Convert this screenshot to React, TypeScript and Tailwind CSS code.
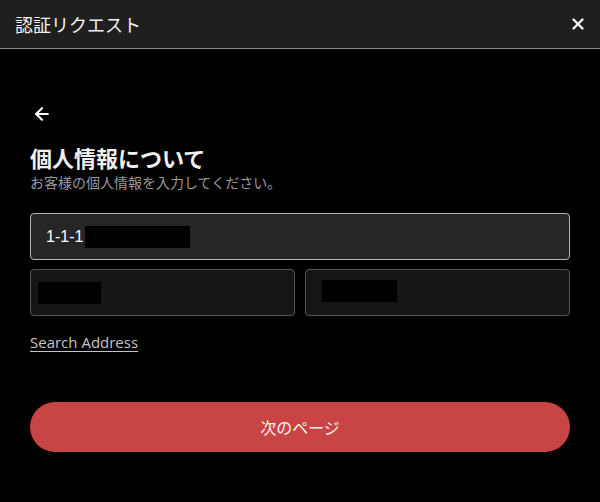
import { ArrowLeft, X } from "lucide-react";

const font = { fontFamily: '"Noto Sans CJK JP", "Noto Sans", sans-serif' };

export default function App() {
  return (
    <div className="w-[600px] h-[502px] bg-black text-white flex flex-col" style={font}>
      <header className="h-[49px] bg-[#1f1f1f] border-b border-[#8a8a8a] flex items-center justify-between pl-[15px] pr-[13px]">
        <h1 className="text-[18px] text-[#f2f2f2]">認証リクエスト</h1>
        <button className="text-white">
          <X size={18} strokeWidth={3} />
        </button>
      </header>

      <main className="flex flex-col px-[30px] pt-[55px]">
        <button className="text-white w-fit ml-[2px]">
          <ArrowLeft size={20} strokeWidth={2.5} />
        </button>
        <h2 className="mt-[18px] text-[22px] font-bold leading-[30px] text-[#f0f0f0]">個人情報について</h2>
        <p className="text-[14px] leading-[20px] text-[#9a9a9a]">お客様の個人情報を入力してください。</p>

        <div className="mt-[21px] h-[47px] rounded-[4px] border border-[#b5b5b5] bg-[#262626] flex items-center pl-[15px]">
          <span className="text-[16px] text-white" style={{ fontFamily: '"Liberation Sans", sans-serif' }}>1-1-1</span>
          <span className="ml-[2px] w-[105px] h-[22px] bg-black" />
        </div>

        <div className="mt-[9px] grid grid-cols-2 gap-[10px]">
          <div className="h-[47px] rounded-[4px] border border-[#555] bg-[#151515] flex items-center pl-[7px]">
            <span className="w-[63px] h-[22px] bg-black mt-[1px]" />
          </div>
          <div className="h-[47px] rounded-[4px] border border-[#555] bg-[#151515] flex items-center pl-[16px]">
            <span className="w-[75px] h-[22px] bg-black mb-[3px]" />
          </div>
        </div>

        <a className="mt-[15px] w-fit text-[15px] text-[#c4c4c4] underline underline-offset-[3px]" style={{ fontFamily: '"Open Sans", sans-serif' }}>
          Search Address
        </a>

        <button className="mt-[48px] h-[50px] rounded-full bg-[#c94444] text-[16px] text-[#f5f5f5]">
          次のページ
        </button>
      </main>
    </div>
  );
}
